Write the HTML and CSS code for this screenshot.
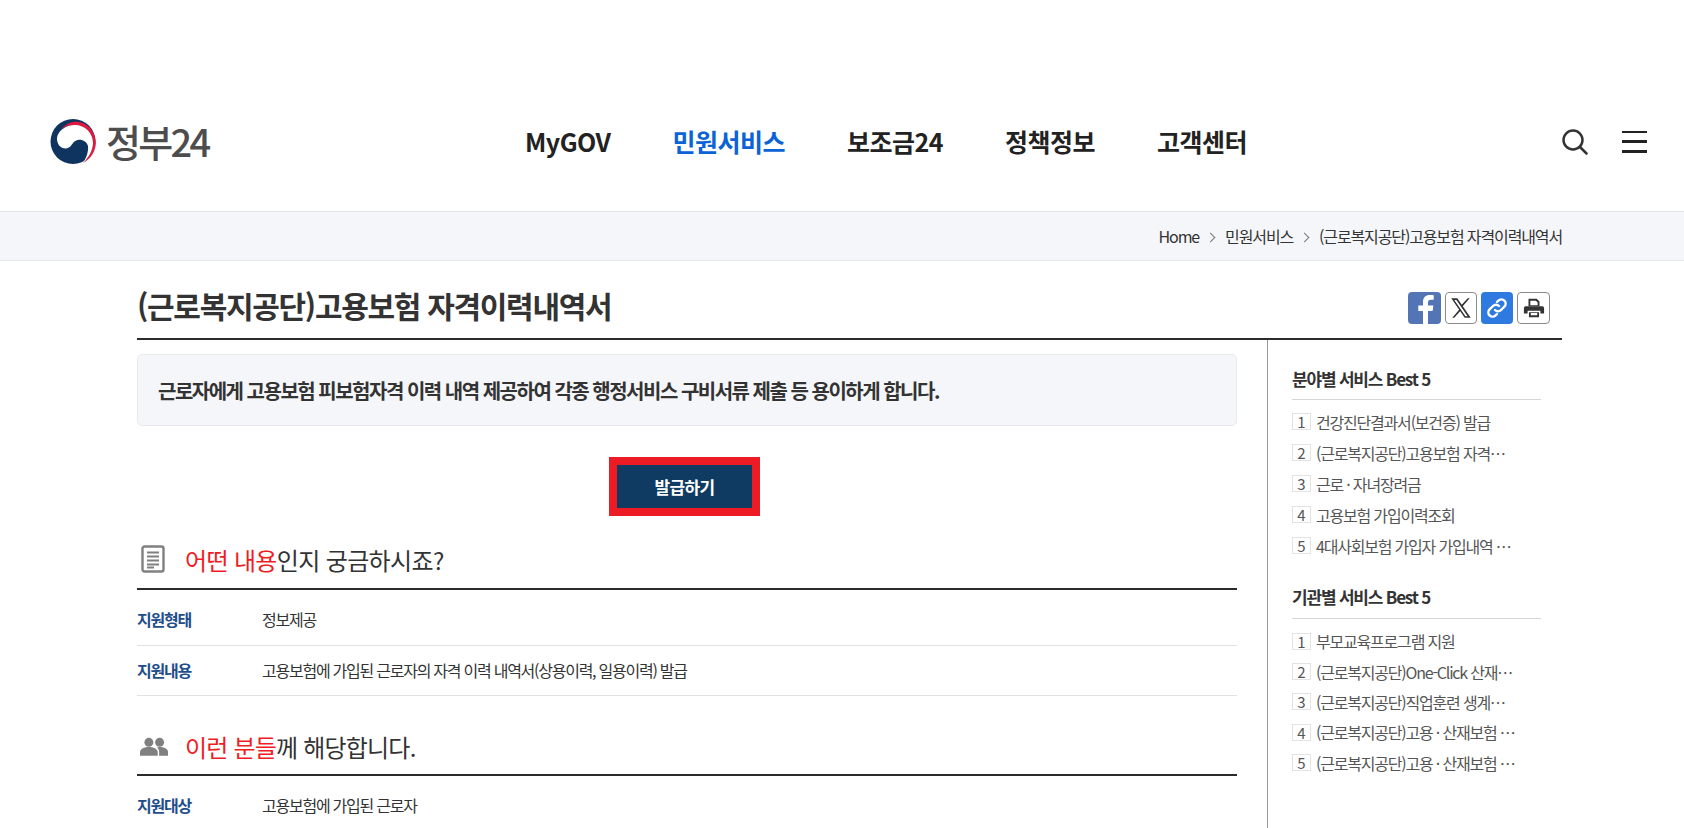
FILE: index.html
```html
<!DOCTYPE html>
<html lang="ko">
<head>
<meta charset="utf-8">
<title>(근로복지공단)고용보험 자격이력내역서</title>
<link rel="stylesheet" href="styles.css">
</head>
<body>
<header class="header">
  <a class="logo">
    <svg class="logo-mark" viewBox="0 0 46 45" width="46" height="45">
      <circle cx="23" cy="22.500" r="22.500" fill="#0f3460"/>
      <path d="M11 10C16 5 21 2.500 27 2.700C38 3.500 46 13 45.800 24C45.600 32 41 40 33 44C39 38 43 31 43 24C43 14 35 6 25 6C20 6 15 7.500 11 10z" fill="#e4173e"/>
      <path d="M7 20C7 12 16 6 25 6C35 6 43 14 43 24C43 31 39 38 33 44C37 38 38.500 32 38 27C37 23 33 20.500 29 20.700C25 21 23 24 21.500 26C20 28 18 29.500 15.500 29.500C10.500 29.500 7 25 7 20z" fill="#fff"/>
    </svg>
    <span class="logo-text">정부24</span>
  </a>
  <nav class="gnb">
    <a class="gnb-item">MyGOV</a>
    <a class="gnb-item gnb-active">민원서비스</a>
    <a class="gnb-item">보조금24</a>
    <a class="gnb-item">정책정보</a>
    <a class="gnb-item">고객센터</a>
  </nav>
  <div class="util">
    <svg class="icon-search" viewBox="0 0 26 26" width="26" height="26" fill="none" stroke="#333" stroke-width="2.500">
      <circle cx="11" cy="11" r="9.500"/>
      <path d="M18 18l6.500 6.500" stroke-linecap="round"/>
    </svg>
    <div class="burger"><i></i><i></i><i></i></div>
  </div>
</header>

<div class="crumbs">
  <div class="crumbs-in">
    <span>Home</span><b class="chev"></b><span>민원서비스</span><b class="chev"></b><span>(근로복지공단)고용보험 자격이력내역서</span>
  </div>
</div>

<div class="wrap">
  <div class="title-row">
    <h1 class="title">(근로복지공단)고용보험 자격이력내역서</h1>
    <div class="share">
      <span class="sbtn sbtn-fb">
        <svg viewBox="0 0 33 32" width="33" height="32"><path d="M20 32V19h4.600l.8-5.400H20v-3c0-1.700.7-2.800 3-2.800h2.700V3.200C25 3.100 23.500 3 21.800 3 17.700 3 15 5.400 15 9.900v3.700h-4.700V19H15v13z" fill="#fff"/></svg>
      </span>
      <span class="sbtn sbtn-line">
        <svg viewBox="0 0 24 24" width="26" height="26"><path d="M3 3h5.600l12.400 18h-5.600zM5.800 4.500l10.300 15h2L7.800 4.500z" fill="#333" fill-rule="evenodd"/><path d="M20 3l-7 8-1-1.300L18.200 3zM4 21l7-8.200 1 1.300L5.800 21z" fill="#333"/></svg>
      </span>
      <span class="sbtn sbtn-link">
        <svg viewBox="0 0 24 24" width="24" height="24" fill="none" stroke="#fff" stroke-width="2.400" stroke-linecap="round"><path d="M10 14a4.200 4.200 0 0 0 6 0l3.400-3.400a4.200 4.200 0 0 0-6-6L12 6"/><path d="M14 10a4.200 4.200 0 0 0-6 0l-3.400 3.400a4.200 4.200 0 0 0 6 6L12 18"/></svg>
      </span>
      <span class="sbtn sbtn-line sbtn-wide">
        <svg viewBox="0 0 24 24" width="22" height="22"><path d="M6 2h9l3 3v5H6z M8 4v5h8V6l-2-2z" fill="#333" fill-rule="evenodd"/><path d="M3 10h18a2 2 0 0 1 2 2v6h-4v-3H5v3H1v-6a2 2 0 0 1 2-2z" fill="#333"/><path d="M6.500 16.500h11V22h-11z" fill="#333"/><path d="M8.500 17.500h7V20h-7z" fill="#fff"/></svg>
      </span>
    </div>
  </div>

  <div class="cols">
    <main class="main">
      <div class="summary">근로자에게 고용보험 피보험자격 이력 내역 제공하여 각종 행정서비스 구비서류 제출 등 용이하게 합니다.</div>
      <div class="btn-row"><a class="issue-btn">발급하기</a></div>

      <h2 class="sec">
        <svg class="sec-icon" viewBox="0 0 24 28" width="24" height="28"><rect x="1.500" y="1.500" width="21" height="25" rx="2" fill="none" stroke="#808080" stroke-width="2.400"/><path d="M6 7.500h12M6 11.500h12M6 15.500h12M6 19.500h12M6 22.500h7" stroke="#808080" stroke-width="2"/></svg>
        <span><em>어떤 내용</em>인지 궁금하시죠?</span>
      </h2>
      <dl class="info">
        <div class="info-row"><dt>지원형태</dt><dd>정보제공</dd></div>
        <div class="info-row"><dt>지원내용</dt><dd>고용보험에 가입된 근로자의 자격 이력 내역서(상용이력, 일용이력) 발급</dd></div>
      </dl>

      <h2 class="sec sec-2">
        <svg class="sec-icon" viewBox="0 0 30 20" width="28" height="19"><circle cx="9.500" cy="5.500" r="4.800" fill="#808080"/><circle cx="21" cy="5.500" r="4.800" fill="#808080"/><path d="M0 20v-4c0-3.500 5-5.500 9.500-5.500S19 12.500 19 16v4z" fill="#808080"/><path d="M20.500 20v-4.500c0-2-1-3.500-2.500-4.500 1-.3 2-.5 3-.5 4.500 0 9 2 9 5v4.500z" fill="#808080"/></svg>
        <span><em>이런 분들</em>께 해당합니다.</span>
      </h2>
      <dl class="info">
        <div class="info-row"><dt>지원대상</dt><dd>고용보험에 가입된 근로자</dd></div>
      </dl>
    </main>

    <aside class="side">
      <section class="best">
        <h3 class="best-title">분야별 서비스 Best 5</h3>
        <ol class="best-list">
          <li><span class="num">1</span><span class="best-text">건강진단결과서(보건증) 발급</span></li>
          <li><span class="num">2</span><span class="best-text">(근로복지공단)고용보험 자격…</span></li>
          <li><span class="num">3</span><span class="best-text">근로 · 자녀장려금</span></li>
          <li><span class="num">4</span><span class="best-text">고용보험 가입이력조회</span></li>
          <li><span class="num">5</span><span class="best-text">4대사회보험 가입자 가입내역 …</span></li>
        </ol>
      </section>
      <section class="best best-2">
        <h3 class="best-title">기관별 서비스 Best 5</h3>
        <ol class="best-list">
          <li><span class="num">1</span><span class="best-text">부모교육프로그램 지원</span></li>
          <li><span class="num">2</span><span class="best-text">(근로복지공단)One-Click 산재…</span></li>
          <li><span class="num">3</span><span class="best-text">(근로복지공단)직업훈련 생계…</span></li>
          <li><span class="num">4</span><span class="best-text">(근로복지공단)고용 · 산재보험 …</span></li>
          <li><span class="num">5</span><span class="best-text">(근로복지공단)고용 · 산재보험 …</span></li>
        </ol>
      </section>
    </aside>
  </div>
</div>
</body>
</html>
```

FILE: styles.css
```css
* { box-sizing: border-box; }
html, body { margin: 0; padding: 0; height: 828px; overflow: hidden; background: #fff; }
body { font-family: "Noto Sans CJK KR", "Noto Sans", sans-serif; color: #333; letter-spacing: -0.6px; }
h1, h2, h3, dl, dt, dd, ol { margin: 0; padding: 0; }
ol { list-style: none; }
em { font-style: normal; }

.header { height: 211px; padding: 103px 0 0 50px; display: flex; align-items: flex-start; position: relative; }
.logo { display: flex; align-items: center; gap: 10px; width: 260px; height: 76px; }
.logo-mark { flex: none; }
.logo-text { font-size: 38px; font-weight: 500; color: #4d4d4d; letter-spacing: -2.700px; line-height: 48px; }
.gnb { display: flex; gap: 62px; margin-left: 215px; height: 76px; align-items: center; }
.gnb-item { font-size: 25px; font-weight: 700; color: #222; letter-spacing: -0.5px; line-height: 36px; }
.gnb-active { color: #0b63d6; }
.util { position: absolute; right: 0; top: 0; }
.icon-search { position: absolute; right: 96px; top: 129px; }
.burger { position: absolute; right: 37px; top: 130.500px; width: 25px; display: flex; flex-direction: column; gap: 7.200px; }
.burger i { display: block; height: 2.800px; background: #222; }

.crumbs { height: 50px; background: #f5f6fa; border-top: 1px solid #e3e5ea; border-bottom: 1px solid #e6e7ea; }
.crumbs-in { width: 1425px; margin-left: 137px; height: 48px; display: flex; justify-content: flex-end; align-items: center; font-size: 16px; color: #333; letter-spacing: -1.13px; }
.chev { width: 7px; height: 7px; border-top: 1.500px solid #777; border-right: 1.500px solid #777; transform: rotate(45deg); margin: 2px 11px 0 8px; }

.wrap { width: 1425px; margin-left: 137px; }
.title-row { height: 79px; border-bottom: 2px solid #2b2b2b; display: flex; justify-content: space-between; align-items: center; padding-top: 10px; }
.title { font-size: 30px; font-weight: 700; color: #333; letter-spacing: -1.300px; line-height: 44px; }
.share { display: flex; gap: 4px; margin-right: 12px; margin-top: 6px; }
.sbtn { width: 32px; height: 32px; border-radius: 4px; display: flex; align-items: center; justify-content: center; overflow: hidden; }
.sbtn-fb { background: #5475b5; width: 33px; align-items: flex-end; }
.sbtn-link { background: #2e7ae0; }
.sbtn-line { background: #fff; border: 1px solid #8a8a8a; }
.sbtn-wide { width: 33px; }

.cols { display: flex; }
.main { width: 1100px; padding-top: 14px; }
.summary { height: 72px; background: #f5f6f9; border: 1px solid #e8e9ed; border-radius: 5px; padding: 0 20px; display: flex; align-items: center; font-size: 20px; font-weight: 700; color: #333; letter-spacing: -1.5px; }
.btn-row { display: flex; justify-content: center; padding: 31px 5px 0 0; }
.issue-btn { width: 151px; height: 59px; background: #0f3b63; border: 8px solid #ed1c24; display: flex; align-items: center; justify-content: center; color: #fff; font-size: 17px; font-weight: 700; letter-spacing: -0.7px; }

.sec { display: flex; align-items: center; height: 74px; padding-top: 14px; border-bottom: 2px solid #2b2b2b; font-size: 24px; font-weight: 400; color: #333; letter-spacing: -0.65px; }
.sec em { color: #f01c24; }
.sec-icon { flex: none; margin: 0 20px 0 4px; }
.sec-2 { height: 80px; padding-top: 23px; letter-spacing: -0.8px; }
.sec-2 .sec-icon { margin: 0 17px 0 3px; }

.info-row { display: flex; align-items: center; min-height: 50px; padding-bottom: 2px; border-bottom: 1px solid #dfe1e4; font-size: 16px; letter-spacing: -1.25px; }
.info-row:first-child { margin-top: 4px; min-height: 52px; padding-bottom: 1px; }
.info dt { width: 125px; font-weight: 700; color: #1f4e8c; }
.info dd { color: #333; }

.side { border-left: 1px solid #999; margin-left: 30px; padding: 27px 21px 0 24px; height: 512px; width: 295px; }
.best { margin-bottom: 24px; }
.best-title { font-size: 17px; font-weight: 700; color: #333; letter-spacing: -1.2px; line-height: 24px; padding-bottom: 8px; border-bottom: 1px solid #d6d6d6; margin-bottom: 6px; }
.best-2 .best-title { padding-bottom: 9px; margin-bottom: 7px; }
.best-list li { height: 31px; display: flex; align-items: center; font-size: 16px; color: #555; letter-spacing: -1.2px; }
.best-2 .best-list li { height: 30.400px; }
.num { flex: none; width: 19px; height: 17px; border: 1px solid #e3e3e3; display: flex; align-items: center; justify-content: center; font-size: 15px; line-height: 1; margin-right: 5px; letter-spacing: 0; }
.best-text { white-space: nowrap; }
```
